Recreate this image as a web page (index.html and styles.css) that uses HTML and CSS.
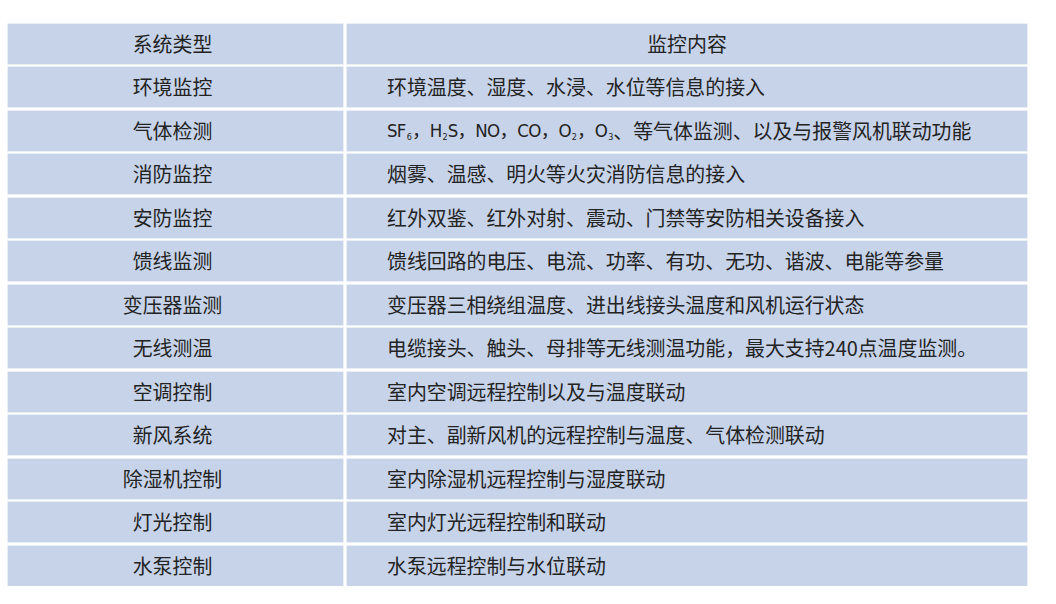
FILE: index.html
```html
<!DOCTYPE html>
<html lang="zh-CN">
<head>
<meta charset="utf-8">
<title>监控系统</title>
<link rel="stylesheet" href="styles.css">
</head>
<body>
<div class="table">
  <div class="cell type">系统类型</div><div class="cell head">监控内容</div>
  <div class="cell type">环境监控</div><div class="cell desc">环境温度、湿度、水浸、水位等信息的接入</div>
  <div class="cell type">气体检测</div><div class="cell desc"><span class="chem">SF<sub>6</sub>，H<sub>2</sub>S，NO，CO，O<sub>2</sub>，O<sub>3</sub></span>、等气体监测、以及与报警风机联动功能</div>
  <div class="cell type">消防监控</div><div class="cell desc">烟雾、温感、明火等火灾消防信息的接入</div>
  <div class="cell type">安防监控</div><div class="cell desc">红外双鉴、红外对射、震动、门禁等安防相关设备接入</div>
  <div class="cell type">馈线监测</div><div class="cell desc">馈线回路的电压、电流、功率、有功、无功、谐波、电能等参量</div>
  <div class="cell type">变压器监测</div><div class="cell desc">变压器三相绕组温度、进出线接头温度和风机运行状态</div>
  <div class="cell type">无线测温</div><div class="cell desc">电缆接头、触头、母排等无线测温功能，最大支持240点温度监测。</div>
  <div class="cell type">空调控制</div><div class="cell desc">室内空调远程控制以及与温度联动</div>
  <div class="cell type">新风系统</div><div class="cell desc">对主、副新风机的远程控制与温度、气体检测联动</div>
  <div class="cell type">除湿机控制</div><div class="cell desc">室内除湿机远程控制与湿度联动</div>
  <div class="cell type">灯光控制</div><div class="cell desc">室内灯光远程控制和联动</div>
  <div class="cell type">水泵控制</div><div class="cell desc">水泵远程控制与水位联动</div>
</div>
</body>
</html>
```
FILE: styles.css
```css
html, body {
  margin: 0;
  padding: 0;
  background: #ffffff;
}
body {
  padding: 24px 0 0 8px;
  font-family: "Noto Sans CJK SC", "Noto Sans", sans-serif;
  color: #232323;
}
.table {
  display: grid;
  grid-template-columns: 335px 680px;
  grid-auto-rows: 39.8px;
  column-gap: 4px;
  row-gap: 3.7px;
  width: 1019px;
}
.cell {
  background: #c7d3e9;
  box-shadow: 0 0 0 0.6px #dce4f1;
  display: flex;
  align-items: center;
  font-size: 19.9px;
  line-height: 1;
  white-space: nowrap;
}
.type, .head {
  justify-content: center;
}
.type {
  padding-right: 6px;
}
.desc {
  padding-left: 40px;
}
.chem {
  font-family: "Liberation Sans Narrow", "DejaVu Sans Condensed", "Noto Sans CJK SC", sans-serif;
  font-size: 18.5px;
  letter-spacing: -0.7px;
}
sub {
  font-size: 9px;
  vertical-align: -3px;
  line-height: 0;
  margin-left: 1px;
  letter-spacing: 0;
}
```
